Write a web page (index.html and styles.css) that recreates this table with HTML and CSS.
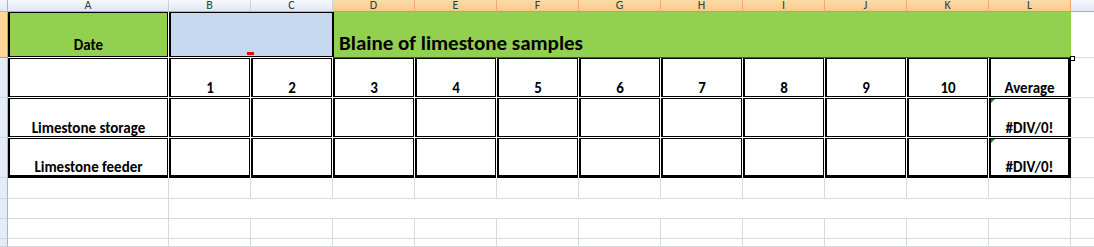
FILE: index.html
```html
<!DOCTYPE html>
<html lang="en">
<head>
<meta charset="utf-8">
<title>Blaine of limestone samples</title>
<link rel="stylesheet" href="styles.css">
</head>
<body>
<div class="sheet">
  <!-- column headers -->
  <div class="corner"></div>
  <div class="colhead">A</div>
  <div class="colhead">B</div>
  <div class="colhead">C</div>
  <div class="colhead sel">D</div>
  <div class="colhead sel">E</div>
  <div class="colhead sel">F</div>
  <div class="colhead sel">G</div>
  <div class="colhead sel">H</div>
  <div class="colhead sel">I</div>
  <div class="colhead sel">J</div>
  <div class="colhead sel">K</div>
  <div class="colhead sel">L</div>
  <div class="colhead rest"></div>

  <!-- row 1 -->
  <div class="rowhead sel"></div>
  <div class="c date">Date</div>
  <div class="c picked span2"><span class="mark"></span></div>
  <div class="c title span9">Blaine of limestone samples<span class="handle"></span></div>
  <div class="g rest"></div>

  <!-- row 2 -->
  <div class="rowhead"></div>
  <div class="c box"></div>
  <div class="c box">1</div>
  <div class="c box">2</div>
  <div class="c box">3</div>
  <div class="c box">4</div>
  <div class="c box">5</div>
  <div class="c box">6</div>
  <div class="c box">7</div>
  <div class="c box">8</div>
  <div class="c box">9</div>
  <div class="c box">10</div>
  <div class="c box last">Average</div>
  <div class="g rest"></div>

  <!-- row 3 -->
  <div class="rowhead"></div>
  <div class="c box">Limestone storage</div>
  <div class="c box"></div>
  <div class="c box"></div>
  <div class="c box"></div>
  <div class="c box"></div>
  <div class="c box"></div>
  <div class="c box"></div>
  <div class="c box"></div>
  <div class="c box"></div>
  <div class="c box"></div>
  <div class="c box"></div>
  <div class="c box last err">#DIV/0!</div>
  <div class="g rest"></div>

  <!-- row 4 -->
  <div class="rowhead"></div>
  <div class="c box bottom">Limestone feeder</div>
  <div class="c box bottom"></div>
  <div class="c box bottom"></div>
  <div class="c box bottom"></div>
  <div class="c box bottom"></div>
  <div class="c box bottom"></div>
  <div class="c box bottom"></div>
  <div class="c box bottom"></div>
  <div class="c box bottom"></div>
  <div class="c box bottom"></div>
  <div class="c box bottom"></div>
  <div class="c box bottom last err">#DIV/0!</div>
  <div class="g rest"></div>

  <!-- row 5 -->
  <div class="rowhead"></div>
  <div class="g"></div><div class="g"></div><div class="g"></div><div class="g"></div>
  <div class="g"></div><div class="g"></div><div class="g"></div><div class="g"></div>
  <div class="g"></div><div class="g"></div><div class="g"></div><div class="g"></div>
  <div class="g rest"></div>

  <!-- row 6 -->
  <div class="rowhead"></div>
  <div class="g"></div>
  <div class="g span11"></div>
  <div class="g rest"></div>

  <!-- row 7 -->
  <div class="rowhead"></div>
  <div class="g"></div><div class="g"></div><div class="g"></div><div class="g"></div>
  <div class="g"></div><div class="g"></div><div class="g"></div><div class="g"></div>
  <div class="g"></div><div class="g"></div><div class="g"></div><div class="g"></div>
  <div class="g rest"></div>

  <!-- row 8 -->
  <div class="rowhead"></div>
  <div class="g"></div><div class="g"></div><div class="g"></div><div class="g"></div>
  <div class="g"></div><div class="g"></div><div class="g"></div><div class="g"></div>
  <div class="g"></div><div class="g"></div><div class="g"></div><div class="g"></div>
  <div class="g rest"></div>
</div>
</body>
</html>
```

FILE: styles.css
```css
html, body {
  margin: 0;
  padding: 0;
  background: #fff;
  overflow: hidden;
}

.sheet {
  display: grid;
  grid-template-columns: 8px 161px repeat(11, 82px) 1fr;
  grid-template-rows: 12px 46px 40px 40px 40px 21px 20px 20px 1fr;
  width: 1094px;
  height: 247px;
  font-family: "Carlito", "Lato", "Liberation Sans", sans-serif;
  color: #000;
}

/* headers */
.corner {
  background: linear-gradient(#f3f6fb, #dfe7f2);
  border-right: 1px solid #9eb6ce;
  border-bottom: 1px solid #9eb6ce;
}

.colhead {
  background: linear-gradient(#f6f8fc, #e0e8f3);
  border-right: 1px solid #c5d3e3;
  border-bottom: 1px solid #9eb6ce;
  font-size: 12px;
  line-height: 11px;
  color: #27413e;
  text-align: center;
}

.colhead.sel {
  background: linear-gradient(#fbdcaa, #f9c987);
  border-right-color: #f2a96a;
  border-bottom-color: #f29436;
}

.colhead.rest {
  border-right: none;
}

.rowhead {
  background: #e4ecf7;
  border-right: 1px solid #9eb6ce;
  border-bottom: 1px solid #c5d3e3;
}

.rowhead.sel {
  background: #fed69a;
  border-right-color: #f29436;
  border-bottom-color: #f29436;
}

/* plain gridline cells */
.g {
  border-right: 1px solid #d4d9e3;
  border-bottom: 1px solid #d4d9e3;
}

.g.rest {
  border-right: none;
}

/* content cells */
.c {
  position: relative;
  display: flex;
  align-items: flex-end;
  justify-content: center;
  font-size: 15px;
  font-weight: 700;
  line-height: 16px;
  padding-bottom: 0;
  box-sizing: border-box;
  white-space: nowrap;
}

.span2 { grid-column: span 2; }
.span9 { grid-column: span 9; }
.span11 { grid-column: span 11; }

.date {
  background: #92d050;
  border: 1px solid #000;
  border-left-width: 2px;
  margin: 0 1px 1px 0;
  padding-bottom: 3px;
}

.picked {
  background: #c6d9f1;
  border: 1px solid #000;
  border-left-width: 2px;
  margin: 0 0 1px 0;
}

.mark {
  position: absolute;
  left: 76px;
  top: 39px;
  width: 7px;
  height: 3px;
  background: #f00;
}

.title {
  justify-content: flex-start;
  padding-left: 5px;
  padding-bottom: 3px;
  background: #92d050;
  border-left: 1px solid #000;
  border-bottom: 1px solid #7030a0;
  font-size: 21px;
  line-height: 22px;
}

.handle {
  position: absolute;
  right: -4px;
  bottom: -4px;
  width: 5px;
  height: 5px;
  background: #fff;
  border: 1px solid #000;
  box-sizing: border-box;
}

.box {
  border: 1px solid #000;
  border-left-width: 2px;
  margin: 0 1px 1px 0;
}

.box.bottom {
  border-bottom-width: 3px;
  margin-bottom: 0;
}

.box.last {
  border-right-width: 3px;
  margin-right: 0;
}

.err::before {
  content: "";
  position: absolute;
  left: 0;
  top: 0;
  border-top: 4px solid #1e8a1e;
  border-right: 4px solid transparent;
}
```
